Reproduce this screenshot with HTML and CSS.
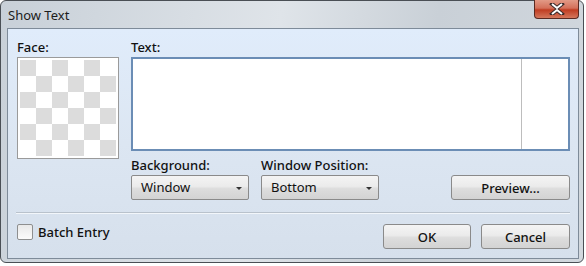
FILE: index.html
```html
<!DOCTYPE html>
<html lang="en">
<head>
    <meta charset="UTF-8">
    <title>Show Text</title>
    <link rel="stylesheet" href="styles.css">
</head>
<body>
    <div class="window">
        <div class="titlebar">
            <span class="title">Show Text</span>
            <div class="close-btn">
                <svg width="16" height="12" viewBox="0 0 16 12">
                    <path d="M3 1 L8 5 L13 1 M3 11 L8 7 L13 11" fill="none" stroke="#3a2a2a" stroke-width="4" stroke-linecap="square"/>
                    <path d="M3 1 L8 5 L13 1 M3 11 L8 7 L13 11" fill="none" stroke="#ffffff" stroke-width="2"/>
                </svg>
            </div>
        </div>

        <div class="client">
            <div class="top-row">
                <div class="face-col">
                    <div class="label">Face:</div>
                    <div class="face-box">
                        <div class="checker"></div>
                    </div>
                </div>
                <div class="text-col">
                    <div class="label">Text:</div>
                    <div class="text-area">
                        <div class="guide"></div>
                    </div>
                    <div class="options">
                        <div class="field">
                            <div class="label">Background:</div>
                            <div class="combo">Window<span class="arrow"></span></div>
                        </div>
                        <div class="field">
                            <div class="label">Window Position:</div>
                            <div class="combo">Bottom<span class="arrow"></span></div>
                        </div>
                        <div class="spacer"></div>
                        <button class="btn preview">Preview...</button>
                    </div>
                </div>
            </div>

            <div class="separator"></div>

            <div class="bottom-row">
                <label class="check"><span class="box"></span>Batch Entry</label>
                <div class="spacer"></div>
                <button class="btn">OK</button>
                <button class="btn">Cancel</button>
            </div>
        </div>
    </div>
</body>
</html>
```

FILE: styles.css
```css
body {
    margin: 0;
    background-color: #ffffff;
    font-family: "Noto Sans", "DejaVu Sans", sans-serif;
    font-size: 13px;
    color: #111111;
}

.window {
    width: 584px;
    height: 263px;
    box-sizing: border-box;
    border: 1px solid #4a4f55;
    border-radius: 6px;
    background: linear-gradient(100deg, #c8d0d8 0%, #dfe4e9 45%, #c9d0d7 70%, #d2d8de 100%);
    padding: 0 4px 3px 6px;
    display: flex;
    flex-direction: column;
}

.titlebar {
    height: 27px;
    display: flex;
    align-items: flex-start;
}

.title {
    padding: 5px 0 0 1px;
    font-size: 13px;
    color: #1c1c1c;
}

.close-btn {
    margin-left: auto;
    margin-top: -1px;
    width: 45px;
    height: 19px;
    box-sizing: border-box;
    border: 1px solid #5a2a22;
    border-top: none;
    border-radius: 0 0 4px 4px;
    background: linear-gradient(#e29a86 0%, #d4705a 45%, #c03d22 55%, #d4775c 100%);
    display: flex;
    align-items: center;
    justify-content: center;
}

.client {
    flex: 1;
    border: 1px solid #7e8b99;
    background: linear-gradient(#e0ecfb 0%, #dce6f2 50%, #d6e0ec 100%);
    padding: 11px 8px 0 8px;
}

.label {
    height: 17px;
    line-height: 14px;
    font-weight: 500;
}

.top-row {
    display: flex;
    gap: 12px;
}

.face-col {
    padding-left: 1px;
}

.face-box {
    width: 102px;
    height: 102px;
    box-sizing: border-box;
    border: 1px solid #9a9a9a;
    background-color: #ffffff;
    padding: 2px;
}

.checker {
    width: 96px;
    height: 96px;
    background: conic-gradient(#ffffff 0 25%, #dcdcdc 0 50%, #ffffff 0 75%, #dcdcdc 0);
    background-size: 32px 32px;
}

.text-col {
    flex: 1;
}

.text-area {
    height: 94px;
    box-sizing: border-box;
    border: 2px solid #6b8db5;
    background-color: #ffffff;
    position: relative;
}

.guide {
    position: absolute;
    top: 0;
    bottom: 0;
    left: 388px;
    width: 1px;
    background-color: #bdbdbd;
}

.options {
    display: flex;
    align-items: flex-end;
    margin-top: 7px;
}

.field {
    width: 130px;
    flex-shrink: 0;
}

.combo {
    width: 118px;
    height: 25px;
    box-sizing: border-box;
    border: 1px solid #8a8a8a;
    border-radius: 2px;
    background: linear-gradient(#f4f4f4 0%, #ebebeb 45%, #dddddd 55%, #d3d3d3 100%);
    padding-left: 9px;
    line-height: 23px;
    position: relative;
}

.arrow {
    position: absolute;
    right: 6px;
    top: 11px;
    border-left: 3px solid transparent;
    border-right: 3px solid transparent;
    border-top: 3px solid #333;
}

.spacer {
    flex: 1;
}

.btn {
    width: 119px;
    height: 25px;
    flex-shrink: 0;
    border: 1px solid #8a8a8a;
    border-radius: 3px;
    background: linear-gradient(#f4f4f4 0%, #ebebeb 45%, #dddddd 55%, #d3d3d3 100%);
    font-family: inherit;
    font-size: 13px;
    font-weight: 500;
    color: #111111;
    padding: 0;
}

.separator {
    height: 1px;
    background-color: #b9c2cc;
    border-bottom: 1px solid #f2f6fa;
    margin-top: 12px;
}

.bottom-row {
    display: flex;
    align-items: flex-start;
    margin-top: 10px;
    gap: 10px;
}

.bottom-row .btn {
    width: 88px;
}

.bottom-row .btn:last-child {
    width: 89px;
}

.check {
    display: flex;
    align-items: center;
    gap: 5px;
    font-weight: 500;
    padding-left: 1px;
    margin-top: -1px;
}

.box {
    width: 14px;
    height: 14px;
    border: 1px solid #8e8f8f;
    border-radius: 2px;
    background: linear-gradient(#e9e9e9, #fbfbfb);
}
```
